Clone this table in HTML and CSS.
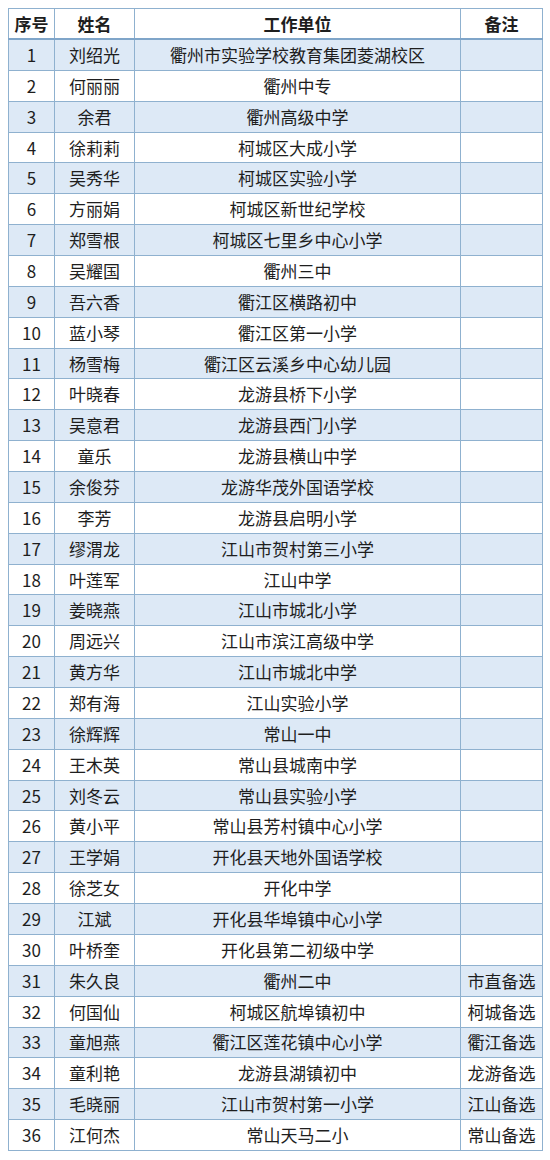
FILE: index.html
```html
<!DOCTYPE html>
<html lang="zh">
<head>
<meta charset="utf-8">
<link rel="stylesheet" href="styles.css">
</head>
<body>
<table class="roster">
<colgroup><col class="c-no"><col class="c-name"><col class="c-unit"><col class="c-note"></colgroup>
<thead>
<tr><th>序号</th><th>姓名</th><th>工作单位</th><th>备注</th></tr>
</thead>
<tbody>
<tr><td>1</td><td>刘绍光</td><td>衢州市实验学校教育集团菱湖校区</td><td></td></tr>
<tr><td>2</td><td>何丽丽</td><td>衢州中专</td><td></td></tr>
<tr><td>3</td><td>余君</td><td>衢州高级中学</td><td></td></tr>
<tr><td>4</td><td>徐莉莉</td><td>柯城区大成小学</td><td></td></tr>
<tr><td>5</td><td>吴秀华</td><td>柯城区实验小学</td><td></td></tr>
<tr><td>6</td><td>方丽娟</td><td>柯城区新世纪学校</td><td></td></tr>
<tr><td>7</td><td>郑雪根</td><td>柯城区七里乡中心小学</td><td></td></tr>
<tr><td>8</td><td>吴耀国</td><td>衢州三中</td><td></td></tr>
<tr><td>9</td><td>吾六香</td><td>衢江区横路初中</td><td></td></tr>
<tr><td>10</td><td>蓝小琴</td><td>衢江区第一小学</td><td></td></tr>
<tr><td>11</td><td>杨雪梅</td><td>衢江区云溪乡中心幼儿园</td><td></td></tr>
<tr><td>12</td><td>叶晓春</td><td>龙游县桥下小学</td><td></td></tr>
<tr><td>13</td><td>吴意君</td><td>龙游县西门小学</td><td></td></tr>
<tr><td>14</td><td>童乐</td><td>龙游县横山中学</td><td></td></tr>
<tr><td>15</td><td>余俊芬</td><td>龙游华茂外国语学校</td><td></td></tr>
<tr><td>16</td><td>李芳</td><td>龙游县启明小学</td><td></td></tr>
<tr><td>17</td><td>缪渭龙</td><td>江山市贺村第三小学</td><td></td></tr>
<tr><td>18</td><td>叶莲军</td><td>江山中学</td><td></td></tr>
<tr><td>19</td><td>姜晓燕</td><td>江山市城北小学</td><td></td></tr>
<tr><td>20</td><td>周远兴</td><td>江山市滨江高级中学</td><td></td></tr>
<tr><td>21</td><td>黄方华</td><td>江山市城北中学</td><td></td></tr>
<tr><td>22</td><td>郑有海</td><td>江山实验小学</td><td></td></tr>
<tr><td>23</td><td>徐辉辉</td><td>常山一中</td><td></td></tr>
<tr><td>24</td><td>王木英</td><td>常山县城南中学</td><td></td></tr>
<tr><td>25</td><td>刘冬云</td><td>常山县实验小学</td><td></td></tr>
<tr><td>26</td><td>黄小平</td><td>常山县芳村镇中心小学</td><td></td></tr>
<tr><td>27</td><td>王学娟</td><td>开化县天地外国语学校</td><td></td></tr>
<tr><td>28</td><td>徐芝女</td><td>开化中学</td><td></td></tr>
<tr><td>29</td><td>江斌</td><td>开化县华埠镇中心小学</td><td></td></tr>
<tr><td>30</td><td>叶桥奎</td><td>开化县第二初级中学</td><td></td></tr>
<tr><td>31</td><td>朱久良</td><td>衢州二中</td><td>市直备选</td></tr>
<tr><td>32</td><td>何国仙</td><td>柯城区航埠镇初中</td><td>柯城备选</td></tr>
<tr><td>33</td><td>童旭燕</td><td>衢江区莲花镇中心小学</td><td>衢江备选</td></tr>
<tr><td>34</td><td>童利艳</td><td>龙游县湖镇初中</td><td>龙游备选</td></tr>
<tr><td>35</td><td>毛晓丽</td><td>江山市贺村第一小学</td><td>江山备选</td></tr>
<tr><td>36</td><td>江何杰</td><td>常山天马二小</td><td>常山备选</td></tr>
</tbody>
</table>
</body>
</html>
```
FILE: styles.css
```css
html, body {
  margin: 0;
  padding: 0;
  background: #ffffff;
}
body {
  padding: 8px 0 0 8px;
  font-family: "Noto Sans CJK SC", "Noto Sans", sans-serif;
  color: #1e1e1e;
}
.roster {
  border-collapse: collapse;
  table-layout: fixed;
  width: 534px;
  font-size: 17px;
}
.c-no { width: 46px; }
.c-name { width: 80px; }
.c-unit { width: 326px; }
.c-note { width: 82px; }
.roster th, .roster td {
  border: 1px solid #8fb1cf;
  text-align: center;
  padding: 0;
  line-height: 20px;
  white-space: nowrap;
}
.roster th {
  height: 29px;
  font-weight: 700;
  border-bottom: 2px solid #7fa5c9;
}
.roster td {
  height: 29.86px;
}
.roster tbody tr:nth-child(odd) {
  background: #dde9f6;
}
.roster tbody tr:nth-child(even) {
  background: #ffffff;
}
```
